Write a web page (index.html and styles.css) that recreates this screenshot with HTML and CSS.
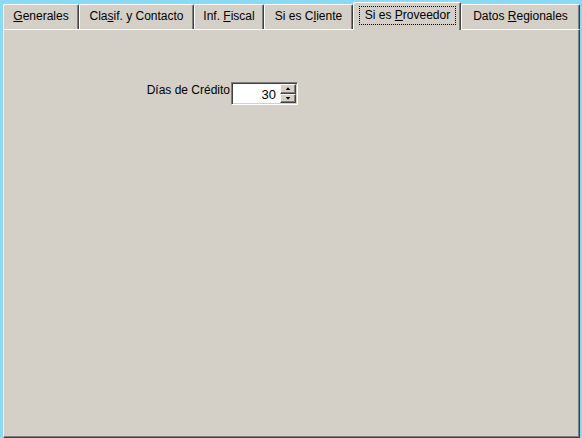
FILE: index.html
```html
<!DOCTYPE html>
<html lang="es">
<head>
<meta charset="utf-8">
<title>Proveedor</title>
<link rel="stylesheet" href="styles.css">
</head>
<body>
<div class="window">
  <div class="tabs">
    <div class="tab w1"><u>G</u>enerales</div>
    <div class="tab w2">Cla<u>s</u>if. y Contacto</div>
    <div class="tab w3">Inf. <u>F</u>iscal</div>
    <div class="tab w4">Si es C<u>l</u>iente</div>
    <div class="tab tab-sel w5"><span class="focus">Si es <u>P</u>roveedor</span></div>
    <div class="tab w6">Datos <u>R</u>egionales</div>
  </div>
  <div class="panel">
    <div class="field">
      <label class="field-label">Días de Crédito</label>
      <div class="spin">
        <div class="spin-val">30</div>
        <div class="spin-btns">
          <div class="spin-btn"><span class="arrow arrow-up"></span></div>
          <div class="spin-btn"><span class="arrow arrow-down"></span></div>
        </div>
      </div>
    </div>
  </div>
</div>
</body>
</html>
```
FILE: styles.css
```css
* { box-sizing: border-box; }
html, body {
  margin: 0;
  padding: 0;
  background: #8ad9f5;
  width: 582px;
  height: 438px;
  overflow: hidden;
  font-family: "Liberation Sans", Arial, sans-serif;
  font-size: 12px;
  color: #000;
}
.window {
  width: 577px;
  margin-left: 3px;
  padding-top: 2px;
}
.tabs {
  display: flex;
  align-items: flex-end;
  height: 27px;
}
.tab {
  height: 25px;
  background: #d4d0c8;
  border-left: 1px solid #fff;
  border-top: 1px solid #fff;
  border-right: 1px solid #404040;
  box-shadow: inset -1px 0 0 #808080;
  border-top-left-radius: 2px;
  border-top-right-radius: 2px;
  padding-top: 4px;
  line-height: 15px;
  text-align: center;
  white-space: nowrap;
}
.tab u { text-decoration: underline; text-underline-offset: 1px; }
.w1 { width: 76px; }
.w2 { width: 115px; }
.w3 { width: 70px; }
.w4 { width: 89px; }
.w5 { width: 108px; }
.w6 { width: 119px; }
.tab-sel {
  height: 28px;
  margin-bottom: -1px;
  padding-top: 0;
  position: relative;
  z-index: 1;
}
.focus {
  display: block;
  margin: 3px 4px 0 5px;
  height: 19px;
  border: 1px dotted #000;
  padding-top: 1px;
  line-height: 15px;
}
.panel {
  height: 409px;
  background: #d4d0c8;
  border-left: 1px solid #fff;
  border-top: 1px solid #fff;
  border-right: 1px solid #404040;
  border-bottom: 1px solid #404040;
  box-shadow: inset -1px -1px 0 #808080;
}
.field {
  display: flex;
  align-items: flex-start;
  margin-top: 52px;
  margin-left: 126px;
  gap: 1px;
}
.field-label {
  width: 100px;
  text-align: right;
  line-height: 15px;
  padding-top: 1px;
}
.spin {
  display: flex;
  width: 67px;
  height: 23px;
  background: #fff;
  border: 1px solid;
  border-color: #808080 #fff #fff #808080;
  box-shadow: inset 1px 1px 0 #404040, inset -1px -1px 0 #d4d0c8;
  padding: 1px;
}
.spin-val {
  flex: 1;
  text-align: right;
  padding-right: 4px;
  line-height: 19px;
  padding-top: 1px;
  font-size: 13px;
}
.spin-btns {
  display: flex;
  flex-direction: column;
  width: 16px;
}
.spin-btn {
  flex: 1;
  background: #d4d0c8;
  border-top: 1px solid #fff;
  border-left: 1px solid #fff;
  border-right: 1px solid #404040;
  border-bottom: 1px solid #404040;
  box-shadow: inset -1px -1px 0 #808080;
  display: flex;
  align-items: center;
  justify-content: center;
}
.arrow {
  width: 5px;
  height: 3px;
  background: #000;
}
.arrow-up { clip-path: polygon(50% 0, 100% 100%, 0 100%); }
.arrow-down { clip-path: polygon(0 0, 100% 0, 50% 100%); }
```
